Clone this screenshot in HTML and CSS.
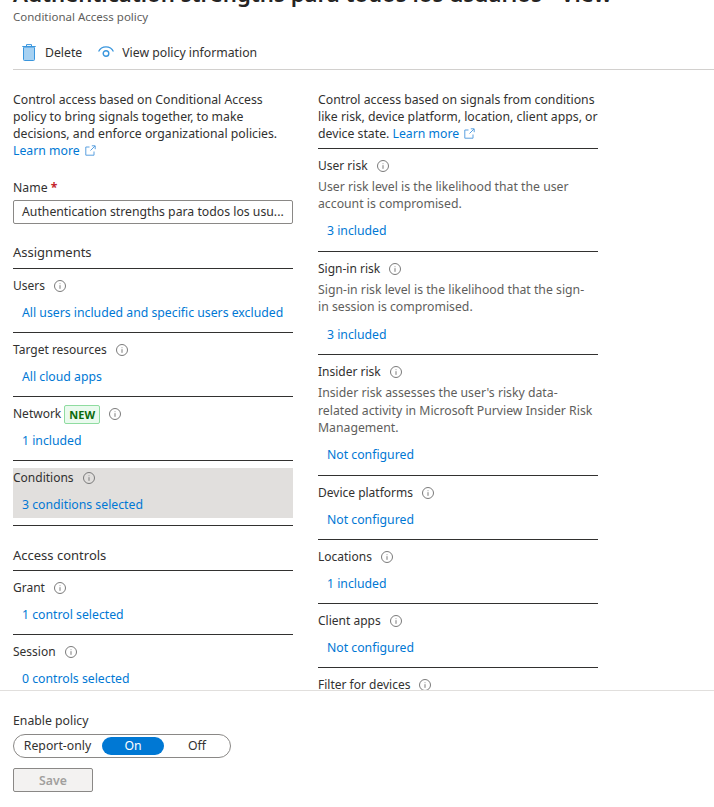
FILE: index.html
```html
<!DOCTYPE html>
<html lang="en">
<head>
    <meta charset="UTF-8">
    <title>Conditional Access policy</title>
    <link rel="stylesheet" href="styles.css">
</head>
<body>
    <svg class="svg-defs" width="0" height="0">
        <symbol id="info" viewBox="0 0 12 12">
            <circle cx="6" cy="6" r="5.5" fill="none" stroke="#7a7a7a"/>
            <path d="M6 5.2v3.6" stroke="#7a7a7a" fill="none"/>
            <path d="M6 3.2v1" stroke="#a0a0a0" fill="none"/>
        </symbol>
        <symbol id="ext" viewBox="0 0 11 11">
            <path d="M4.5 2H.8v8.2H9V6.5M5.5 5.5L10 1M6.8 .8h3.4v3.4" fill="none" stroke="#5aa0e0"/>
        </symbol>
    </svg>
    <div class="page">
        <header class="blade-head">
            <h1 class="title">Authentication strengths para todos los usuarios - View</h1>
            <div class="subtitle">Conditional Access policy</div>
        </header>
        <div class="toolbar">
            <button class="tool-btn" type="button">
                <svg class="tool-icon" width="14" height="17" viewBox="0 0 14 17">
                    <path d="M4.5 2V.6h5V2M.3 2.5h13.4" fill="none" stroke="#3a96dd"/>
                    <rect x="1.5" y="3" width="11" height="13.5" rx="1" fill="#a6d1f2" stroke="#3a96dd"/>
                </svg>
                Delete
            </button>
            <button class="tool-btn eye-btn" type="button">
                <svg class="tool-icon" width="16" height="12" viewBox="0 0 16 12">
                    <path d="M.6 5.5C3.5 -.6 12.5 -.6 15.4 5.5" fill="none" stroke="#3a96dd" stroke-width="1.2"/>
                    <circle cx="8" cy="7.5" r="2.8" fill="none" stroke="#3a96dd" stroke-width="1.4"/>
                </svg>
                View policy information
            </button>
        </div>
        <main class="content">
            <section class="col">
                <p class="intro">Control access based on Conditional Access policy to bring signals together, to make decisions, and enforce organizational policies.<br><a class="link" href="#">Learn more <svg class="ext" width="11" height="11"><use href="#ext"/></svg></a></p>
                <div class="name-label">Name <span class="req">*</span></div>
                <div class="name-input">Authentication strengths para todos los usu...</div>
                <h2 class="group-title">Assignments</h2>
                <div class="item">
                    <div class="item-label">Users<svg class="info" width="12" height="12"><use href="#info"/></svg></div>
                    <a class="item-value" href="#">All users included and specific users excluded</a>
                </div>
                <div class="item">
                    <div class="item-label">Target resources<svg class="info" width="12" height="12"><use href="#info"/></svg></div>
                    <a class="item-value" href="#">All cloud apps</a>
                </div>
                <div class="item">
                    <div class="item-label">Network<span class="badge">NEW</span><svg class="info" width="12" height="12"><use href="#info"/></svg></div>
                    <a class="item-value" href="#">1 included</a>
                </div>
                <div class="item item-selected">
                    <div class="selected-box">
                        <div class="item-label">Conditions<svg class="info" width="12" height="12"><use href="#info"/></svg></div>
                        <a class="item-value" href="#">3 conditions selected</a>
                    </div>
                </div>
                <h2 class="group-title group-access">Access controls</h2>
                <div class="item">
                    <div class="item-label">Grant<svg class="info" width="12" height="12"><use href="#info"/></svg></div>
                    <a class="item-value" href="#">1 control selected</a>
                </div>
                <div class="item">
                    <div class="item-label">Session<svg class="info" width="12" height="12"><use href="#info"/></svg></div>
                    <a class="item-value" href="#">0 controls selected</a>
                </div>
            </section>
            <section class="col">
                <p class="intro intro-right">Control access based on signals from conditions like risk, device platform, location, client apps, or device state. <a class="link" href="#">Learn more <svg class="ext" width="11" height="11"><use href="#ext"/></svg></a></p>
                <div class="item">
                    <div class="item-label">User risk<svg class="info" width="12" height="12"><use href="#info"/></svg></div>
                    <p class="item-desc">User risk level is the likelihood that the user account is compromised.</p>
                    <a class="item-value" href="#">3 included</a>
                </div>
                <div class="item">
                    <div class="item-label">Sign-in risk<svg class="info" width="12" height="12"><use href="#info"/></svg></div>
                    <p class="item-desc">Sign-in risk level is the likelihood that the sign-in session is compromised.</p>
                    <a class="item-value" href="#">3 included</a>
                </div>
                <div class="item">
                    <div class="item-label">Insider risk<svg class="info" width="12" height="12"><use href="#info"/></svg></div>
                    <p class="item-desc">Insider risk assesses the user's risky data-related activity in Microsoft Purview Insider Risk Management.</p>
                    <a class="item-value" href="#">Not configured</a>
                </div>
                <div class="item">
                    <div class="item-label">Device platforms<svg class="info" width="12" height="12"><use href="#info"/></svg></div>
                    <a class="item-value" href="#">Not configured</a>
                </div>
                <div class="item">
                    <div class="item-label">Locations<svg class="info" width="12" height="12"><use href="#info"/></svg></div>
                    <a class="item-value" href="#">1 included</a>
                </div>
                <div class="item">
                    <div class="item-label">Client apps<svg class="info" width="12" height="12"><use href="#info"/></svg></div>
                    <a class="item-value" href="#">Not configured</a>
                </div>
                <div class="item">
                    <div class="item-label">Filter for devices<svg class="info" width="12" height="12"><use href="#info"/></svg></div>
                    <a class="item-value" href="#">Not configured</a>
                </div>
            </section>
        </main>
        <footer class="footer">
            <div class="enable-label">Enable policy</div>
            <div class="toggle">
                <span class="toggle-opt">Report-only</span>
                <span class="toggle-opt toggle-on">On</span>
                <span class="toggle-opt">Off</span>
            </div>
            <button class="save-btn" type="button" disabled>Save</button>
        </footer>
    </div>
</body>
</html>
```
FILE: styles.css
```css
html, body {
    margin: 0;
    height: 100%;
    overflow: hidden;
}
body {
    font-family: "Noto Sans", Arial, sans-serif;
    font-size: 12.25px;
    color: #323130;
    background: white;
}
.svg-defs {
    display: block;
    height: 0;
}
.page {
    height: 807px;
    display: flex;
    flex-direction: column;
}
.blade-head {
    padding-left: 13px;
    height: 26px;
    flex: none;
}
.title {
    margin: -19px 0 2px;
    font-size: 22.2px;
    line-height: 26px;
    font-weight: 600;
    white-space: nowrap;
    color: #252423;
}
.subtitle {
    font-size: 11.5px;
    line-height: 16px;
    color: #605e5c;
}
.toolbar {
    margin: 9px 0 0 13px;
    height: 34px;
    flex: none;
    display: flex;
    align-items: center;
    gap: 16px;
    padding-left: 9px;
    border-bottom: 1px solid #d2d0ce;
}
.tool-btn {
    border: none;
    background: none;
    padding: 0;
    font: inherit;
    color: #323130;
    display: flex;
    align-items: center;
    gap: 9px;
}
.eye-btn {
    gap: 8px;
}
.content {
    flex: 1;
    min-height: 0;
    overflow: hidden;
    display: flex;
    gap: 25px;
    padding: 21px 0 0 13px;
}
.col {
    width: 280px;
}
.intro {
    margin: 0;
    line-height: 17px;
    height: 85px;
}
.intro-right {
    height: auto;
    margin-bottom: 6px;
}
.link, .item-value {
    color: #0078d4;
    text-decoration: none;
}
.ext {
    margin-left: 2px;
    vertical-align: -1px;
}
.name-label {
    line-height: 17px;
    margin-top: 3px;
}
.req {
    color: #c4262e;
    font-weight: 700;
}
.name-input {
    margin-top: 4px;
    height: 22px;
    line-height: 22px;
    border: 1px solid #8a8886;
    border-radius: 2px;
    padding: 0 8px;
    white-space: nowrap;
    overflow: hidden;
}
.group-title {
    margin: 18px 0 0;
    font-size: 13px;
    line-height: 20px;
    font-weight: 400;
    height: 26px;
}
.group-access {
    margin-top: 19px;
    height: 25px;
}
.item {
    border-top: 1px solid #323130;
    padding: 8px 0 10px;
}
.item-label {
    display: flex;
    align-items: center;
    height: 18px;
    line-height: 18px;
    font-size: 12px;
}
.info {
    margin-left: 9px;
}
.badge {
    margin-left: 3px;
    border: 1px solid #8fdca0;
    background: #eafaee;
    border-radius: 2px;
    color: #0b6a0b;
    font-size: 11px;
    font-weight: 700;
    line-height: 17px;
    padding: 0 4px;
}
.item-value {
    display: block;
    margin: 9px 0 0 9px;
    line-height: 18px;
}
.item-desc {
    margin: 3px 0 0;
    padding-right: 5px;
    line-height: 17.2px;
    color: #605e5c;
}
.item-desc + .item-value {
    margin-top: 10px;
    margin-bottom: 0.8px;
}
.item-selected {
    padding: 7px 0;
    border-bottom: 1px solid #323130;
}
.selected-box {
    background: #e1dfdd;
    padding: 1px 0 4px;
}
.footer {
    flex: none;
    height: 117px;
    border-top: 1px solid #e1dfdd;
    padding: 21px 0 0 13px;
    box-sizing: border-box;
}
.enable-label {
    line-height: 18px;
}
.toggle {
    margin-top: 4px;
    width: 216px;
    height: 22px;
    border: 1px solid #8a8886;
    border-radius: 12px;
    display: flex;
    align-items: center;
}
.toggle-opt {
    text-align: center;
    line-height: 18px;
    width: 64px;
    margin-left: 1px;
}
.toggle-opt:first-child {
    width: 87px;
    margin-left: 0;
}
.toggle-on {
    width: 62px;
    background: #0078d4;
    color: white;
    border-radius: 9px;
}
.save-btn {
    display: block;
    margin-top: 10px;
    width: 80px;
    height: 24px;
    border: 1px solid #8a8886;
    border-radius: 2px;
    background: #f3f2f1;
    color: #a19f9d;
    font: inherit;
    font-weight: 600;
}
```
